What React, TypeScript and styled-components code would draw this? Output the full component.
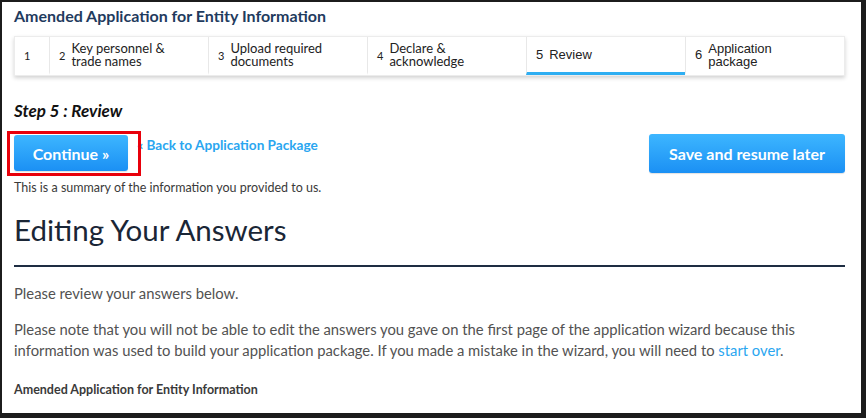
import React from "react";
import styled, {createGlobalStyle} from "styled-components";

const GlobalStyle = createGlobalStyle`
  html, body {
    margin: 0;
    padding: 0;
    background: #ffffff;
  }
  body {
    font-family: Lato, "Open Sans", sans-serif;
  }
`

type Step = { num: string, label: string, active?: boolean, arial?: boolean }

const steps: Step[] = [
    {num: '1', label: ''},
    {num: '2', label: 'Key personnel &\ntrade names'},
    {num: '3', label: 'Upload required\ndocuments'},
    {num: '4', label: 'Declare &\nacknowledge'},
    {num: '5', label: 'Review', active: true, arial: true},
    {num: '6', label: 'Application\npackage', arial: true},
]

const App = () => {
    return (
        <>
            <GlobalStyle/>
            <Frame>
                <PageTitle>Amended Application for Entity Information</PageTitle>
                <StepBar>
                    {steps.map(step => (
                        <StepTab key={step.num} $active={step.active} $arial={step.arial}>
                            <StepNum $arial={step.arial}>{step.num}</StepNum>
                            {step.label && <StepLabel>{step.label}</StepLabel>}
                        </StepTab>
                    ))}
                </StepBar>

                <StepHeading>Step 5 : Review</StepHeading>

                <ActionRow>
                    <LeftActions>
                        <ContinueButton>Continue »</ContinueButton>
                        <BackLink href="#">« Back to Application Package</BackLink>
                    </LeftActions>
                    <SaveButton>Save and resume later</SaveButton>
                </ActionRow>

                <Summary>This is a summary of the information you provided to us.</Summary>

                <SectionTitle>Editing Your Answers</SectionTitle>
                <Divider/>

                <Paragraph>Please review your answers below.</Paragraph>
                <Paragraph>
                    Please note that you will not be able to edit the answers you gave on the first page of the
                    application wizard because this<br/>information was used to build your application package. If you
                    made a mistake in the wizard, you will need to <InlineLink href="#">start over</InlineLink>.
                </Paragraph>

                <SubTitle>Amended Application for Entity Information</SubTitle>
            </Frame>
        </>
    )
}

const Frame = styled.div`
  width: 866px;
  height: 418px;
  box-sizing: border-box;
  border-style: solid;
  border-color: #1c1c1c;
  border-width: 2px 5px 5px 2px;
  padding: 4px 16px 0 12px;
  overflow: hidden;
  background: #fff;
`

const PageTitle = styled.h1`
  margin: 0;
  font-size: 16px;
  line-height: 20px;
  font-weight: 700;
  color: #1f3b5e;
`

const StepBar = styled.div`
  margin-top: 10px;
  display: grid;
  grid-template-columns: 34px repeat(5, 1fr);
  background: #fff;
  box-shadow: 0 2px 4px rgba(0, 0, 0, 0.18);
  border: 1px solid #ececec;
`

const StepTab = styled.div<{ $active?: boolean, $arial?: boolean }>`
  height: 35px;
  display: flex;
  align-items: center;
  gap: 6px;
  padding: 0 9px;
  border-left: 1px solid #e8e8e8;
  border-bottom: 3px solid ${p => p.$active ? '#2eaef2' : 'transparent'};
  font-family: ${p => p.$arial ? '"Liberation Sans", Arial, sans-serif' : 'Lato, sans-serif'};
  color: #222;

  &:first-child {
    border-left: none;
  }
`

const StepNum = styled.span<{ $arial?: boolean }>`
  font-size: ${p => p.$arial ? '13px' : '11px'};
  margin-top: ${p => p.$arial ? '0' : '2px'};
`

const StepLabel = styled.span`
  white-space: pre-line;
  font-size: 13px;
  line-height: 13px;
`

const StepHeading = styled.h2`
  margin: 24px 0 0;
  font-size: 17px;
  line-height: 22px;
  font-weight: 700;
  font-style: italic;
  color: #111;
`

const ActionRow = styled.div`
  margin-top: 12px;
  display: flex;
  justify-content: space-between;
  align-items: flex-start;
`

const LeftActions = styled.div`
  display: flex;
  align-items: flex-start;
  gap: 9px;
  padding-top: 1px;
`

const BlueButton = styled.button`
  border: none;
  border-radius: 3px;
  background: linear-gradient(#3db6ff, #1b90f4);
  color: #fff;
  font-family: Lato, sans-serif;
  font-weight: 700;
  cursor: pointer;
  box-shadow: 0 1px 1px rgba(0, 0, 0, 0.12);
`

const ContinueButton = styled(BlueButton)`
  position: relative;
  width: 114px;
  height: 36px;
  font-size: 16px;

  &::after {
    content: "";
    position: absolute;
    top: -4px;
    left: -7px;
    right: -13px;
    bottom: -5px;
    border: 3px solid #e8000b;
    pointer-events: none;
  }
`

const SaveButton = styled(BlueButton)`
  width: 196px;
  height: 39px;
  font-size: 16px;
`

const BackLink = styled.a`
  margin-top: 2px;
  font-size: 13.6px;
  line-height: 16px;
  font-weight: 700;
  color: #2aa6f0;
  text-decoration: none;
`

const Summary = styled.p`
  margin: 7px 0 0;
  font-size: 12.5px;
  line-height: 16px;
  color: #3a3a3a;
`

const SectionTitle = styled.h2`
  margin: 16px 0 0;
  font-size: 29.5px;
  line-height: 36px;
  font-weight: 400;
  color: #1a2636;
`

const Divider = styled.hr`
  margin: 17px 0 0;
  border: none;
  height: 2px;
  background: #1e2d42;
`

const Paragraph = styled.p`
  margin: 16px 0 0;
  font-size: 14.8px;
  line-height: 21px;
  color: #525252;

  & + & {
    margin-top: 15px;
  }
`

const InlineLink = styled.a`
  color: #2aa6f0;
  text-decoration: none;
`

const SubTitle = styled.h3`
  margin: 21px 0 0;
  font-size: 12.5px;
  line-height: 15px;
  font-weight: 700;
  color: #3a3a3a;
`

export default App
